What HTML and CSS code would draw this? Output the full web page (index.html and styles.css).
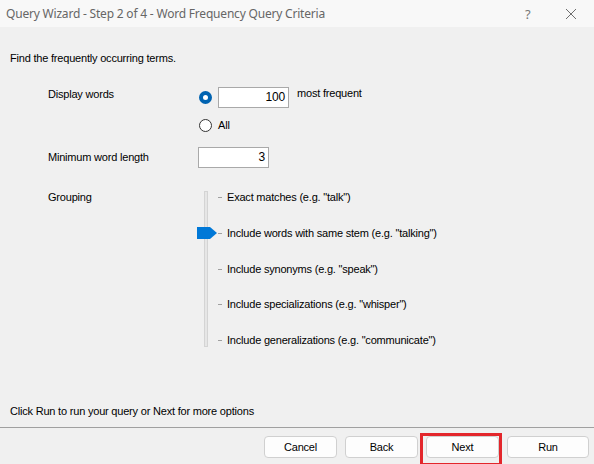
FILE: index.html
```html
<!DOCTYPE html>
<html>

<head>
  <meta charset="UTF-8">
  <title>Query Wizard</title>
  <link rel="stylesheet" href="styles.css">
</head>

<body>
  <div class="window">
    <div class="titlebar">
      <span class="title">Query Wizard - Step 2 of 4 - Word Frequency Query Criteria</span>
      <span class="help">?</span>
      <span class="close">
        <svg width="12" height="12" viewBox="0 0 12 12">
          <path d="M1 1 L11 11 M11 1 L1 11" stroke="#6e6e6e" stroke-width="1" fill="none" />
        </svg>
      </span>
    </div>

    <div class="page">
      <p class="intro">Find the frequently occurring terms.</p>

      <div class="form">
        <div class="label label-display">Display words</div>
        <div class="control">
          <div class="choice">
            <span class="radio radio-on"></span>
            <span class="box box-count">100</span>
            <span class="suffix">most frequent</span>
          </div>
          <div class="choice choice-all">
            <span class="radio"></span>
            <span class="choice-text">All</span>
          </div>
        </div>

        <div class="label label-length">Minimum word length</div>
        <div class="control control-length">
          <span class="box box-length">3</span>
        </div>

        <div class="label label-group">Grouping</div>
        <div class="control control-group">
          <div class="slider">
            <div class="track"></div>
            <div class="thumb"></div>
          </div>
          <ul class="levels">
            <li>Exact matches (e.g. "talk")</li>
            <li>Include words with same stem (e.g. "talking")</li>
            <li>Include synonyms (e.g. "speak")</li>
            <li>Include specializations (e.g. "whisper")</li>
            <li>Include generalizations (e.g. "communicate")</li>
          </ul>
        </div>
      </div>

      <p class="hint">Click Run to run your query or Next for more options</p>
    </div>

    <div class="buttons">
      <button class="btn">Cancel</button>
      <button class="btn">Back</button>
      <button class="btn btn-next">Next</button>
      <button class="btn btn-run">Run</button>
    </div>
  </div>
</body>

</html>
```

FILE: styles.css
```css
html,
body {
  margin: 0;
  padding: 0;
}

body {
  background-color: #f0f0f0;
  font-family: "Liberation Sans", Arial, sans-serif;
  font-size: 11px;
  letter-spacing: -0.2px;
  color: #000;
}

.window {
  width: 594px;
  height: 464px;
  display: flex;
  flex-direction: column;
  overflow: hidden;
}

.titlebar {
  height: 27px;
  flex: none;
  display: flex;
  align-items: center;
  background-color: #f8f8f8;
  font-family: "Noto Sans", sans-serif;
  font-size: 12px;
  color: #666;
}

.title {
  margin-left: 6px;
  flex: 1;
  letter-spacing: -0.2px;
}

.help {
  width: 12px;
  margin-right: 28px;
  color: #777;
  font-size: 13px;
}

.close {
  display: flex;
  margin-right: 17px;
}

.page {
  flex: 1;
  min-height: 0;
  display: flex;
  flex-direction: column;
  padding: 0 10px;
}

.intro {
  margin: 25px 0 0;
  line-height: 13px;
}

.form {
  display: grid;
  grid-template-columns: 150px 1fr;
  align-items: start;
  margin-top: 22px;
  margin-left: 38px;
}

.label {
  line-height: 13px;
}

.label-display {
  margin-top: 1px;
}

.choice {
  display: flex;
  align-items: center;
  height: 21px;
}

.choice-all {
  margin-top: 11px;
  height: 13px;
}

.radio {
  width: 11px;
  height: 11px;
  border: 1px solid #333;
  border-radius: 50%;
  background-color: #fff;
  margin-left: 1px;
  margin-right: 6px;
  flex: none;
}

.radio-on {
  width: 5px;
  height: 5px;
  border: 4px solid #0063b1;
  background-color: #fff;
}

.choice-text {
  line-height: 13px;
}

.box {
  display: block;
  box-sizing: border-box;
  height: 21px;
  line-height: 19px;
  border: 1px solid #a9a9a9;
  background-color: #fff;
  text-align: right;
  padding-right: 3px;
  font-size: 12px;
}

.box-count {
  width: 71px;
}

.suffix {
  align-self: flex-start;
  margin-left: 8px;
  line-height: 13px;
}

.label-length {
  margin-top: 19px;
}

.control-length {
  margin-top: 15px;
}

.box-length {
  width: 71px;
}

.label-group {
  margin-top: 23px;
}

.control-group {
  margin-top: 23px;
  display: flex;
}

.slider {
  position: relative;
  width: 20px;
  height: 156px;
  flex: none;
}

.track {
  margin-left: 6px;
  width: 2px;
  height: 154px;
  background-color: #e6e6e6;
  border: 1px solid #d4d4d4;
}

.thumb {
  position: absolute;
  left: -1px;
  top: 36px;
  width: 20px;
  height: 12px;
  background-color: #0078d7;
  clip-path: polygon(0 0, 65% 0, 100% 50%, 65% 100%, 0 100%);
}

.levels {
  list-style: none;
  margin: 0;
  padding: 0;
}

.levels li {
  height: 35.75px;
  line-height: 13px;
  padding-left: 9px;
  position: relative;
}

.levels li::before {
  content: "";
  position: absolute;
  left: 0;
  top: 6px;
  width: 4px;
  height: 1px;
  background-color: #a0a0a0;
}

.hint {
  margin: auto 0 9px;
  line-height: 13px;
}

.buttons {
  flex: none;
  height: 37px;
  box-sizing: border-box;
  border-top: 1px solid #a0a0a0;
  display: flex;
  justify-content: flex-end;
  align-items: flex-start;
  gap: 8px;
  padding: 8px 5px 0 0;
}

.btn {
  width: 73px;
  height: 22px;
  box-sizing: border-box;
  border: 1px solid #d0d0d0;
  border-radius: 4px;
  background-color: #fdfdfd;
  font-family: "Liberation Sans", Arial, sans-serif;
  font-size: 11px;
  letter-spacing: -0.2px;
  color: #000;
  padding: 0;
}

.btn-run {
  width: 82px;
}

.btn-next {
  position: relative;
}

.btn-next::after {
  content: "";
  position: absolute;
  left: -7px;
  right: -4px;
  top: -4px;
  bottom: -9px;
  border: 3px solid #e3262b;
}
```
